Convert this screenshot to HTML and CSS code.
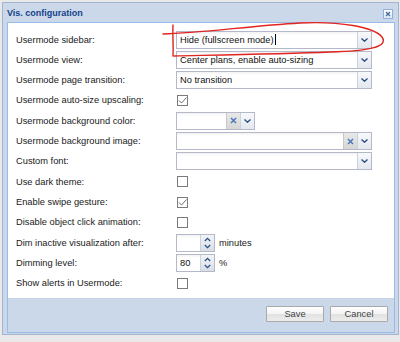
FILE: index.html
```html
<!DOCTYPE html>
<html>
<head>
<meta charset="utf-8">
<link rel="stylesheet" href="styles.css">
</head>
<body>
<div class="win">
  <div class="win-head">
    <span class="win-title">Vis. configuration</span>
    <span class="tool-close"><svg width="10" height="10" viewBox="0 0 10 10"><path d="M2.5 2.5 L7.5 7.5 M7.5 2.5 L2.5 7.5" stroke="#3d6aa8" stroke-width="1.6" fill="none"/></svg></span>
  </div>
  <div class="win-inner">
    <div class="win-body">
      <div class="row"><span class="lbl">Usermode sidebar:</span><div class="field combo"><span class="ftext">Hide (fullscreen mode)<span class="cursor"></span></span><span class="trig"><svg width="7" height="4" viewBox="0 0 7 4"><path d="M0.5 0.5 L3.5 3.2 L6.5 0.5" stroke="#2b4f86" stroke-width="1.4" fill="none"/></svg></span></div></div>
      <div class="row"><span class="lbl">Usermode view:</span><div class="field combo"><span class="ftext">Center plans, enable auto-sizing</span><span class="trig"><svg width="7" height="4" viewBox="0 0 7 4"><path d="M0.5 0.5 L3.5 3.2 L6.5 0.5" stroke="#2b4f86" stroke-width="1.4" fill="none"/></svg></span></div></div>
      <div class="row"><span class="lbl">Usermode page transition:</span><div class="field combo"><span class="ftext">No transition</span><span class="trig"><svg width="7" height="4" viewBox="0 0 7 4"><path d="M0.5 0.5 L3.5 3.2 L6.5 0.5" stroke="#2b4f86" stroke-width="1.4" fill="none"/></svg></span></div></div>
      <div class="row"><span class="lbl">Usermode auto-size upscaling:</span><span class="cb"><svg width="11" height="11" viewBox="0 0 11 11"><path d="M2 5.5 L4.5 8 L9.5 2.5" stroke="#6a6a6a" stroke-width="1" fill="none"/></svg></span></div>
      <div class="row"><span class="lbl">Usermode background color:</span><div class="field color"><span class="ftext"></span><span class="clr"><svg width="7" height="7" viewBox="0 0 7 7"><path d="M1 1 L6 6 M6 1 L1 6" stroke="#4a78b8" stroke-width="1.5" fill="none"/></svg></span><span class="trig"><svg width="7" height="4" viewBox="0 0 7 4"><path d="M0.5 0.5 L3.5 3.2 L6.5 0.5" stroke="#2b4f86" stroke-width="1.4" fill="none"/></svg></span></div></div>
      <div class="row"><span class="lbl">Usermode background image:</span><div class="field combo"><span class="ftext"></span><span class="clr"><svg width="7" height="7" viewBox="0 0 7 7"><path d="M1 1 L6 6 M6 1 L1 6" stroke="#4a78b8" stroke-width="1.5" fill="none"/></svg></span><span class="trig"><svg width="7" height="4" viewBox="0 0 7 4"><path d="M0.5 0.5 L3.5 3.2 L6.5 0.5" stroke="#2b4f86" stroke-width="1.4" fill="none"/></svg></span></div></div>
      <div class="row"><span class="lbl">Custom font:</span><div class="field combo"><span class="ftext"></span><span class="trig"><svg width="7" height="4" viewBox="0 0 7 4"><path d="M0.5 0.5 L3.5 3.2 L6.5 0.5" stroke="#2b4f86" stroke-width="1.4" fill="none"/></svg></span></div></div>
      <div class="row"><span class="lbl">Use dark theme:</span><span class="cb"></span></div>
      <div class="row"><span class="lbl">Enable swipe gesture:</span><span class="cb"><svg width="11" height="11" viewBox="0 0 11 11"><path d="M2 5.5 L4.5 8 L9.5 2.5" stroke="#6a6a6a" stroke-width="1" fill="none"/></svg></span></div>
      <div class="row"><span class="lbl">Disable object click animation:</span><span class="cb"></span></div>
      <div class="row"><span class="lbl">Dim inactive visualization after:</span><div class="field spin"><span class="ftext"></span><span class="spbtn"><svg width="7" height="14" viewBox="0 0 7 14"><path d="M0.8 5 L3.5 2.4 L6.2 5 M0.8 9 L3.5 11.6 L6.2 9" stroke="#2b4f86" stroke-width="1.3" fill="none"/></svg></span></div><span class="unit">minutes</span></div>
      <div class="row"><span class="lbl">Dimming level:</span><div class="field spin"><span class="ftext">80</span><span class="spbtn"><svg width="7" height="14" viewBox="0 0 7 14"><path d="M0.8 5 L3.5 2.4 L6.2 5 M0.8 9 L3.5 11.6 L6.2 9" stroke="#2b4f86" stroke-width="1.3" fill="none"/></svg></span></div><span class="unit">%</span></div>
      <div class="row"><span class="lbl">Show alerts in Usermode:</span><span class="cb"></span></div>
    </div>
    <div class="win-foot">
      <button class="btn">Save</button>
      <button class="btn">Cancel</button>
    </div>
  </div>
</div>
<svg class="scribble" width="400" height="342" viewBox="0 0 400 342">
  <path d="M163 34 C 200 33, 250 26, 300 23 C 340 21, 374 27, 382 37 C 389 47, 368 51, 330 52 C 280 54, 220 55, 174 56" stroke="#e0241f" stroke-width="1.4" fill="none" stroke-linecap="round"/>
  <path d="M173 25 C 172.5 35, 173.5 45, 173 56" stroke="#e0241f" stroke-width="1.4" fill="none" stroke-linecap="round"/>
</svg>
</body>
</html>
```

FILE: styles.css
```css
html, body {
  margin: 0;
  padding: 0;
}
body {
  width: 400px;
  height: 342px;
  background: #e9e9e9;
  font-family: "Liberation Sans", Arial, sans-serif;
  font-size: 9.3px;
  color: #1a1a1a;
  position: relative;
  overflow: hidden;
}
.win {
  position: relative;
  margin: 2px 0 0 2px;
  width: 397px;
  height: 333px;
  box-sizing: border-box;
  border: 1px solid #a3b4cf;
  background: #cbd8ea;
  padding: 0 3px 1px 4px;
  display: flex;
  flex-direction: column;
}
.win-head {
  height: 19px;
  display: flex;
  align-items: center;
  justify-content: space-between;
  flex: none;
}
.win-title {
  font-weight: bold;
  color: #15428b;
  font-size: 9px;
  padding-left: 0;
  padding-top: 1px;
}
.tool-close {
  width: 10px;
  height: 10px;
  box-sizing: border-box;
  border: 1px solid #8fb0dc;
  background: linear-gradient(#ffffff, #dfe8f5);
  display: flex;
  margin-right: 2px;
  margin-top: 2px;
}
.tool-close svg { width: 8px; height: 8px; }
.win-inner {
  flex: 1;
  border: 1px solid #99bbe8;
  display: flex;
  flex-direction: column;
}
.win-body {
  background: #fff;
  height: 276px;
  box-sizing: border-box;
  padding: 7.5px 0 0 8px;
  display: flex;
  flex-direction: column;
  border-bottom: 1px solid #c5d3e6;
}
.row {
  height: 18px;
  margin-bottom: 2.33px;
  display: flex;
  align-items: center;
  flex: none;
}
.lbl {
  width: 160px;
  flex: none;
}
.field {
  height: 18px;
  box-sizing: border-box;
  border: 1px solid #b5b8c8;
  background: linear-gradient(#f2f2f2 0, #ffffff 3px, #ffffff 100%);
  display: flex;
  align-items: stretch;
}
.combo { width: 196px; }
.color { width: 79px; }
.spin { width: 39px; }
.ftext {
  flex: 1;
  padding-left: 3px;
  display: flex;
  align-items: center;
  color: #111;
  white-space: nowrap;
}
.cursor {
  display: inline-block;
  width: 1px;
  height: 11px;
  background: #000;
  margin-left: 1px;
}
.trig, .clr, .spbtn {
  width: 13px;
  flex: none;
  display: flex;
  align-items: center;
  justify-content: center;
  border-left: 1px solid #c9d2e0;
  background: linear-gradient(#f8f9fb, #e3e8ef);
}
.clr {
  background: linear-gradient(#e9e9e9, #d6d6d6);
  border-left: 1px solid #c8c8c8;
}
.spbtn {
  background: linear-gradient(#f2f4f7, #d9dee6);
}
.cb {
  width: 11px;
  height: 11px;
  box-sizing: border-box;
  border: 1px solid #7a7a7a;
  background: #fff;
  display: flex;
  align-items: center;
  justify-content: center;
  margin-left: 1px;
}
.cb svg { flex: none; }
.unit {
  margin-left: 4px;
}
.win-foot {
  flex: 1;
  display: flex;
  justify-content: flex-end;
  align-items: flex-start;
  padding: 7px 6px 0 0;
  gap: 6px;
}
.btn {
  width: 58px;
  height: 16px;
  box-sizing: border-box;
  border: 1px solid #a9a9a9;
  border-radius: 1px;
  background: linear-gradient(#ffffff 0, #f3f3f3 50%, #e2e2e2 51%, #ececec 100%);
  font-family: "Liberation Sans", Arial, sans-serif;
  font-size: 9.3px;
  color: #444;
  padding: 0;
  line-height: 14px;
}
.scribble {
  position: absolute;
  left: 0;
  top: 0;
  pointer-events: none;
}
```
